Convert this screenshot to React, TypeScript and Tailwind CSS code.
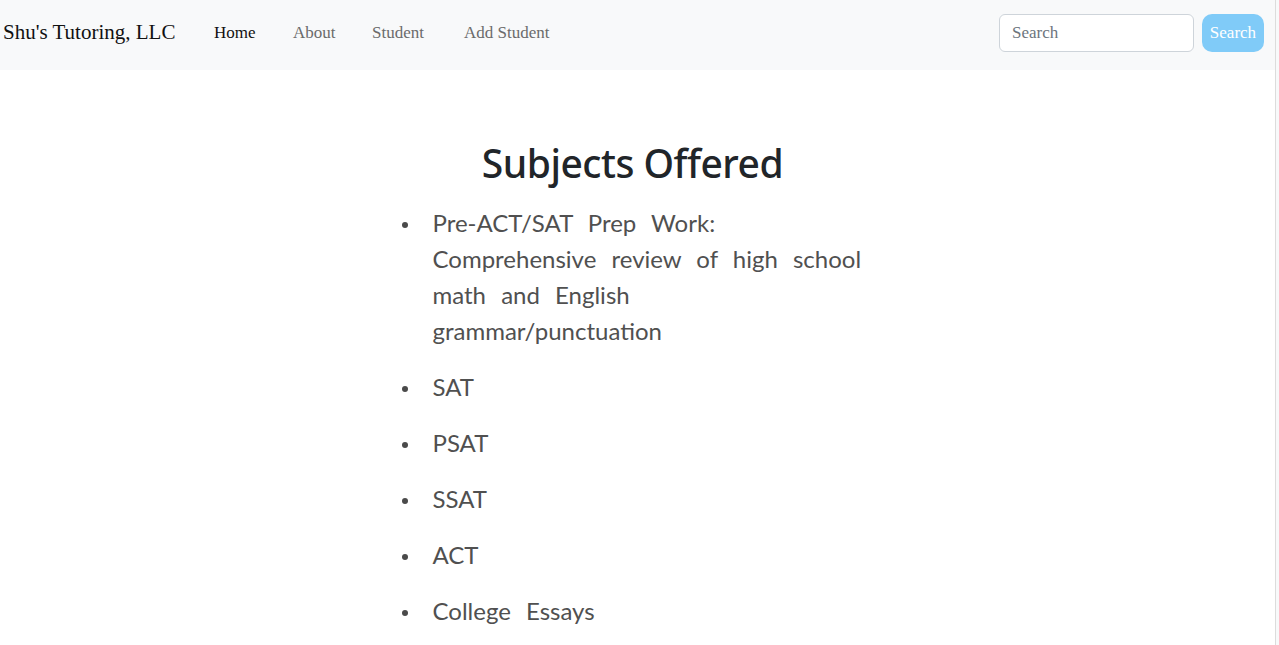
import React from "react";

const first = ["Pre-ACT/SAT Prep Work:", "Comprehensive review of high school", "math and English", "grammar/punctuation"];
const items = ["SAT", "PSAT", "SSAT", "ACT", "College Essays"];

function Dot() {
  return (
    <span className="flex h-[36px] w-[33px] shrink-0 items-center pl-[2px] pt-[4px]">
      <span className="h-[6px] w-[6px] rounded-full bg-[#4a4a4a]" />
    </span>
  );
}

export default function App() {
  return (
    <div className="flex min-h-[645px] w-full bg-[#f8f9fa]">
      <div className="w-[1276px] shrink-0 border-r border-[#dcdcdc] bg-white">
        <nav className="flex h-[70px] items-center bg-[#f8f9fa] pl-[3px] pr-[11px] [font-family:'Liberation_Serif',serif]">
          <span className="w-[211px] pb-[4px] text-[21px] text-[#111]">Shu's Tutoring, LLC</span>
          <a className="w-[79px] pb-[4px] text-[17px] text-[#111]">Home</a>
          <a className="w-[79px] pb-[4px] text-[17px] text-[#6b6b6b]">About</a>
          <a className="w-[92px] pb-[4px] text-[17px] text-[#6b6b6b]">Student</a>
          <a className="pb-[4px] text-[17px] text-[#6b6b6b]">Add Student</a>
          <div className="ml-auto flex items-center gap-[8px] pb-[4px]">
            <div className="flex h-[38px] w-[195px] items-center rounded-[6px] border border-[#ced4da] bg-white px-[12px] text-[17px] text-[#6c757d]">
              Search
            </div>
            <button className="flex h-[38px] w-[62px] items-center justify-center rounded-[10px] bg-[#80cbf8] text-[17px] text-white">
              Search
            </button>
          </div>
        </nav>
        <main className="flex flex-col items-center pt-[69px]">
          <h1 className="ml-[-10px] text-[39px] font-medium leading-[48px] tracking-[-0.5px] text-[#212529] [font-family:'Noto_Sans',sans-serif]">
            Subjects Offered
          </h1>
          <ul className="ml-[-14px] mt-[18px] w-[462px] text-[24px] leading-[36px] text-[#505050] [font-family:Lato,sans-serif] [word-spacing:9px]">
            <li className="mb-[20px] flex">
              <Dot />
              <span>
                {first.map((l, i) => (
                  <React.Fragment key={l}>
                    {l}
                    {i < first.length - 1 && <br />}
                  </React.Fragment>
                ))}
              </span>
            </li>
            {items.map((t) => (
              <li key={t} className="mb-[20px] flex">
                <Dot />
                <span>{t}</span>
              </li>
            ))}
          </ul>
        </main>
      </div>
    </div>
  );
}
